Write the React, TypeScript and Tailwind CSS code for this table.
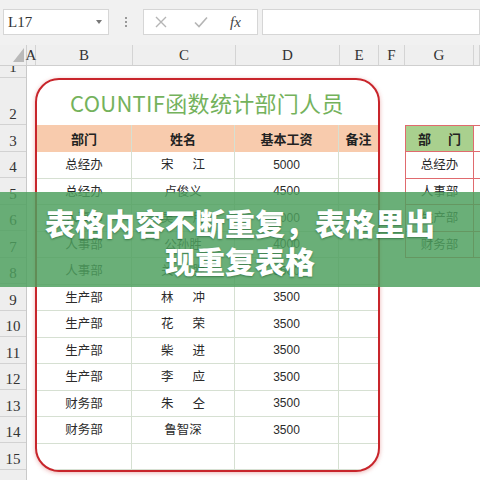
import React from "react";

const cjk = "font-['Noto_Sans_CJK_SC',sans-serif]";
const serif = "font-['Liberation_Serif','DejaVu_Serif',serif]";

// rows 4..15 of the sheet: 部门, 姓名, 基本工资
const staff: [string, string, string][] = [
  ["总经办", "宋　江", "5000"],
  ["总经办", "卢俊义", "4500"],
  ["人事部", "吴　用", "4000"],
  ["人事部", "公孙胜", "4000"],
  ["人事部", "关　胜", "3500"],
  ["生产部", "林　冲", "3500"],
  ["生产部", "花　荣", "3500"],
  ["生产部", "柴　进", "3500"],
  ["生产部", "李　应", "3500"],
  ["财务部", "朱　仝", "3500"],
  ["财务部", "鲁智深", "3500"],
  ["", "", ""],
];

const depts = ["总经办", "人事部", "生产部", "财务部"];

const columns: [string, string][] = [
  ["A", "w-[9px]"],
  ["B", "w-[97px]"],
  ["C", "w-[103px]"],
  ["D", "w-[104px]"],
  ["E", "w-[39px]"],
  ["F", "w-[26px]"],
  ["G", "w-[69px]"],
  ["", "flex-1"],
];

function Name({ value }: { value: string }) {
  // names written with a full-width space are spread out like in the sheet
  if (value.includes("　")) {
    const [a, b] = value.split("　");
    return (
      <span className="flex items-center justify-center gap-[19px]">
        <span>{a}</span>
        <span>{b}</span>
      </span>
    );
  }
  return <span>{value}</span>;
}

function Toolbar() {
  return (
    <div className="flex h-[45px] items-start bg-[#f1f1f1] pt-[9px] pl-[3px]">
      <div className="flex h-[26px] w-[106px] items-center justify-between border border-[#d6d6d6] bg-white pl-[4px] pr-[6px]">
        <span className={`${serif} text-[15px] text-[#333]`}>L17</span>
        <span className="h-0 w-0 border-x-[3px] border-t-[4px] border-x-transparent border-t-[#777]" />
      </div>
      <div className="flex h-[26px] w-[34px] flex-col items-center justify-center gap-[2px]">
        <span className="h-[2px] w-[2px] bg-[#999]" />
        <span className="h-[2px] w-[2px] bg-[#999]" />
        <span className="h-[2px] w-[2px] bg-[#999]" />
      </div>
      <div className="flex h-[26px] w-[115px] items-center border border-[#d6d6d6] bg-white">
        <svg width="14" height="14" viewBox="0 0 14 14" className="ml-[10px]">
          <path d="M2 2 L12 12 M12 2 L2 12" stroke="#b5b5b5" strokeWidth="1.4" fill="none" />
        </svg>
        <svg width="16" height="14" viewBox="0 0 16 14" className="ml-[25px]">
          <path d="M2 7.5 L6 11.5 L14 2.5" stroke="#b5b5b5" strokeWidth="1.6" fill="none" />
        </svg>
        <span className={`${serif} ml-[21px] text-[15px] italic text-[#444]`}>fx</span>
      </div>
      <div className="ml-[4px] h-[26px] flex-1 border border-[#d6d6d6] bg-white" />
    </div>
  );
}

function ColumnHeader() {
  return (
    <div className="flex h-[21px] border-b border-[#cfcfcf] bg-[#efefef]">
      <div className="flex w-[27px] items-end justify-end border-r border-[#cfcfcf] pr-[2px] pb-[3px]">
        <svg width="11" height="14" viewBox="0 0 11 14">
          <path d="M11 0 L11 14 L0 14 Z" fill="#b9b9b9" />
        </svg>
      </div>
      {columns.map(([label, w], i) => (
        <div
          key={i}
          className={`${w} flex items-center justify-center border-r border-[#d4d4d4] ${serif} text-[15px] text-[#333]`}
        >
          {label}
        </div>
      ))}
    </div>
  );
}

function RowHeaders() {
  const nums = Array.from({ length: 16 }, (_, i) => i + 1);
  return (
    <div className="flex w-[27px] flex-col border-r border-[#c9c9c9] bg-[#eeeeee]">
      {nums.map((n) => (
        <div
          key={n}
          className={`flex shrink-0 items-end justify-center border-b border-[#d2d2d2] pb-[2px] ${serif} text-[15px] leading-none text-[#333] ${
            n === 1 ? "h-[12px] overflow-hidden" : n === 2 ? "h-[47px]" : "h-[26.5px]"
          }`}
        >
          {n}
        </div>
      ))}
    </div>
  );
}

function SalaryTable() {
  const cell = "flex items-center justify-center border-r border-[#d6e0d2]";
  return (
    <div className="mt-[12px] h-[394px] w-[345px] overflow-hidden rounded-[24px] border-2 border-[#c8252b] bg-white shadow-[0_1px_4px_rgba(200,40,40,0.35)]">
      <div className={`flex h-[45px] items-center pl-[33px] ${cjk} text-[22px] tracking-[0.3px] text-[#74b25c]`}>
        COUNTIF函数统计部门人员
      </div>
      <div className={`grid h-[27px] grid-cols-[95px_103px_104px_1fr] bg-[#f8cbad] ${cjk} text-[13px] font-bold text-[#222]`}>
        <div className={cell}>部门</div>
        <div className={cell}>姓名</div>
        <div className={cell}>基本工资</div>
        <div className="flex items-center justify-center">备注</div>
      </div>
      {staff.map(([dept, name, pay], i) => (
        <div
          key={i}
          className="grid h-[26.5px] grid-cols-[95px_103px_104px_1fr] border-b border-[#d6e0d2] text-[#2b2b2b]"
        >
          <div className={`${cell} ${cjk} text-[12.5px]`}>{dept}</div>
          <div className={`${cell} ${cjk} text-[12.5px]`}>
            <Name value={name} />
          </div>
          <div className={`${cell} font-['Liberation_Sans',Arial,sans-serif] text-[12px]`}>{pay}</div>
          <div />
        </div>
      ))}
    </div>
  );
}

function DeptTable() {
  return (
    <div className="ml-[25px] mt-[59px] flex flex-1 flex-col">
      <div className="flex h-[27px] border-y border-[#e06a6e]">
        <div className={`flex w-[69px] items-center justify-center gap-[17px] border-x border-[#e06a6e] bg-[#a9d08e] ${cjk} text-[13px] font-bold text-[#222]`}>
          <span>部</span>
          <span>门</span>
        </div>
        <div className="flex-1" />
      </div>
      {depts.map((d) => (
        <div key={d} className="flex h-[26.5px] border-b border-[#e06a6e]">
          <div className={`flex w-[69px] items-center justify-center border-x border-[#e06a6e] ${cjk} text-[12.5px] text-[#2b2b2b]`}>
            {d}
          </div>
          <div className="flex-1" />
        </div>
      ))}
    </div>
  );
}

export default function App() {
  return (
    <div className="relative h-[480px] w-[480px] overflow-hidden bg-white">
      <Toolbar />
      <ColumnHeader />
      <div className="flex">
        <RowHeaders />
        <div className="flex flex-1">
          <div className="w-[8px]" />
          <SalaryTable />
          <DeptTable />
        </div>
      </div>
      {/* green caption band laid over the screenshot */}
      <div className="absolute inset-x-0 top-[192px] flex h-[95px] flex-col items-center justify-center bg-[rgba(78,160,94,0.84)] pt-[2px]">
        <p className={`${cjk} text-[30px] font-black leading-[38px] text-white [text-shadow:0_1px_2px_rgba(0,60,20,0.45)]`}>
          表格内容不断重复，表格里出
        </p>
        <p className={`${cjk} text-[30px] font-black leading-[38px] text-white [text-shadow:0_1px_2px_rgba(0,60,20,0.45)]`}>
          现重复表格
        </p>
      </div>
    </div>
  );
}
